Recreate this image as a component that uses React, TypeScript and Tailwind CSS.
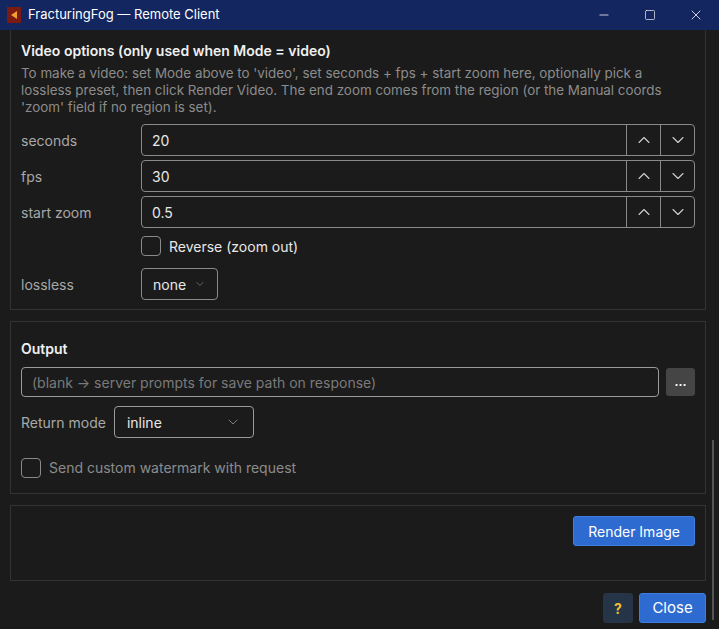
import { ChevronUp, ChevronDown, Minus, Square, X } from 'lucide-react';

const NumberRow = ({ label, value }: { label: string; value: string }) => (
  <div className="flex items-center h-[32px] mb-[4px]">
    <div className="w-[120px] text-[#a8a8a8]">{label}</div>
    <div className="flex-1 flex h-full border border-[#8a8a8a] rounded-[4px]">
      <div className="flex-1 flex items-center px-[10px] text-[#e8e8e8]">{value}</div>
      <div className="w-[34px] border-l border-[#8a8a8a] flex items-center justify-center">
        <ChevronUp size={20} strokeWidth={1.3} className="text-[#d0d0d0]" />
      </div>
      <div className="w-[34px] border-l border-[#8a8a8a] flex items-center justify-center">
        <ChevronDown size={20} strokeWidth={1.3} className="text-[#d0d0d0]" />
      </div>
    </div>
  </div>
);

export default function App() {
  return (
    <div className="w-[719px] h-[629px] bg-[#1b1b1b] flex flex-col overflow-hidden text-[14px]" style={{ fontFamily: 'Inter, "Noto Sans", sans-serif' }}>
      {/* Title bar */}
      <div className="h-[30px] bg-[#142660] flex items-center text-white shrink-0">
        <div className="w-[14px] h-[16px] ml-[7px] mr-[7px] bg-[#7a1a10] flex items-center justify-center">
          <div className="w-0 h-0 border-y-[4px] border-y-transparent border-r-[6px] border-r-[#f0a030]" />
        </div>
        <span className="text-[13px] flex-1">FracturingFog — Remote Client</span>
        <div className="w-[46px] flex justify-center"><Minus size={14} strokeWidth={1.3} /></div>
        <div className="w-[46px] flex justify-center"><Square size={12} strokeWidth={1.3} /></div>
        <div className="w-[46px] flex justify-center"><X size={16} strokeWidth={1.2} /></div>
      </div>

      <div className="flex-1 flex relative">
        <div className="flex-1 pl-[10px] pr-[13px]">
          {/* Video options panel */}
          <div className="border border-[#333] border-t-0 px-[10px] pt-[10px] pb-[9px]">
            <div className="font-semibold text-[#f0f0f0] mb-[4px]">Video options (only used when Mode = video)</div>
            <div className="text-[#8c8c8c] text-[13.4px] leading-[17px] mb-[8px]">
              To make a video: set Mode above to 'video', set seconds + fps + start zoom here, optionally pick a lossless preset, then click Render Video. The end zoom comes from the region (or the Manual coords 'zoom' field if no region is set).
            </div>
            <NumberRow label="seconds" value="20" />
            <NumberRow label="fps" value="30" />
            <NumberRow label="start zoom" value="0.5" />
            <div className="flex items-center h-[28px] pl-[120px]">
              <div className="w-[20px] h-[20px] border border-[#8a8a8a] rounded-[4px] mr-[8px]" />
              <span className="text-[#e8e8e8]">Reverse (zoom out)</span>
            </div>
            <div className="flex items-center h-[32px] mt-[8px]">
              <div className="w-[120px] text-[#a8a8a8]">lossless</div>
              <div className="h-[32px] w-[77px] border border-[#8a8a8a] rounded-[4px] flex items-center px-[11px] gap-[8px] text-[#e8e8e8]">
                none <ChevronDown size={16} strokeWidth={1} className="text-[#b0b0b0]" />
              </div>
            </div>
          </div>

          {/* Output panel */}
          <div className="mt-[11px] border border-[#333] px-[10px] pt-[17px] pb-[15px]">
            <div className="font-semibold text-[#f0f0f0] mb-[8px] leading-[20px]">Output</div>
            <div className="flex gap-[7px] mb-[9px]">
              <div className="flex-1 h-[30px] border border-[#9a9a9a] rounded-[4px] flex items-center px-[10px] text-[#7a7a7a]">
                (blank → server prompts for save path on response)
              </div>
              <div className="w-[29px] h-[28px] mt-[1px] bg-[#454545] rounded-[3px] flex items-center justify-center text-white text-[12px] font-bold">...</div>
            </div>
            <div className="flex items-center gap-[8px] mb-[19px]">
              <span className="text-[#a8a8a8]">Return mode</span>
              <div className="w-[140px] h-[32px] border border-[#9a9a9a] rounded-[4px] flex items-center justify-between px-[12px] text-[#e8e8e8]">
                inline <ChevronDown size={16} strokeWidth={1} className="text-[#b0b0b0]" />
              </div>
            </div>
            <div className="flex items-center">
              <div className="w-[20px] h-[20px] border border-[#8a8a8a] rounded-[4px] mr-[8px]" />
              <span className="text-[#8c8c8c]">Send custom watermark with request</span>
            </div>
          </div>

          {/* Action panel */}
          <div className="mt-[11px] border border-[#333] h-[76px] flex justify-end items-start pt-[10px] pr-[10px]">
            <button className="h-[30px] px-[14px] bg-[#2e6bd0] border border-[#3f7de0] rounded-[3px] text-white">Render Image</button>
          </div>

          <div className="flex justify-end gap-[6px] mt-[12px]">
            <button className="w-[30px] h-[30px] bg-[#253447] rounded-[3px] text-[#f0c030] font-bold">?</button>
            <button className="w-[67px] h-[30px] bg-[#2e6bd0] border border-[#3f7de0] rounded-[3px] text-white text-[15px]">Close</button>
          </div>
        </div>
        {/* Scrollbar */}
        <div className="absolute right-[5px] top-[410px] w-[2px] h-[180px] bg-[#555]" />
      </div>
    </div>
  );
}
